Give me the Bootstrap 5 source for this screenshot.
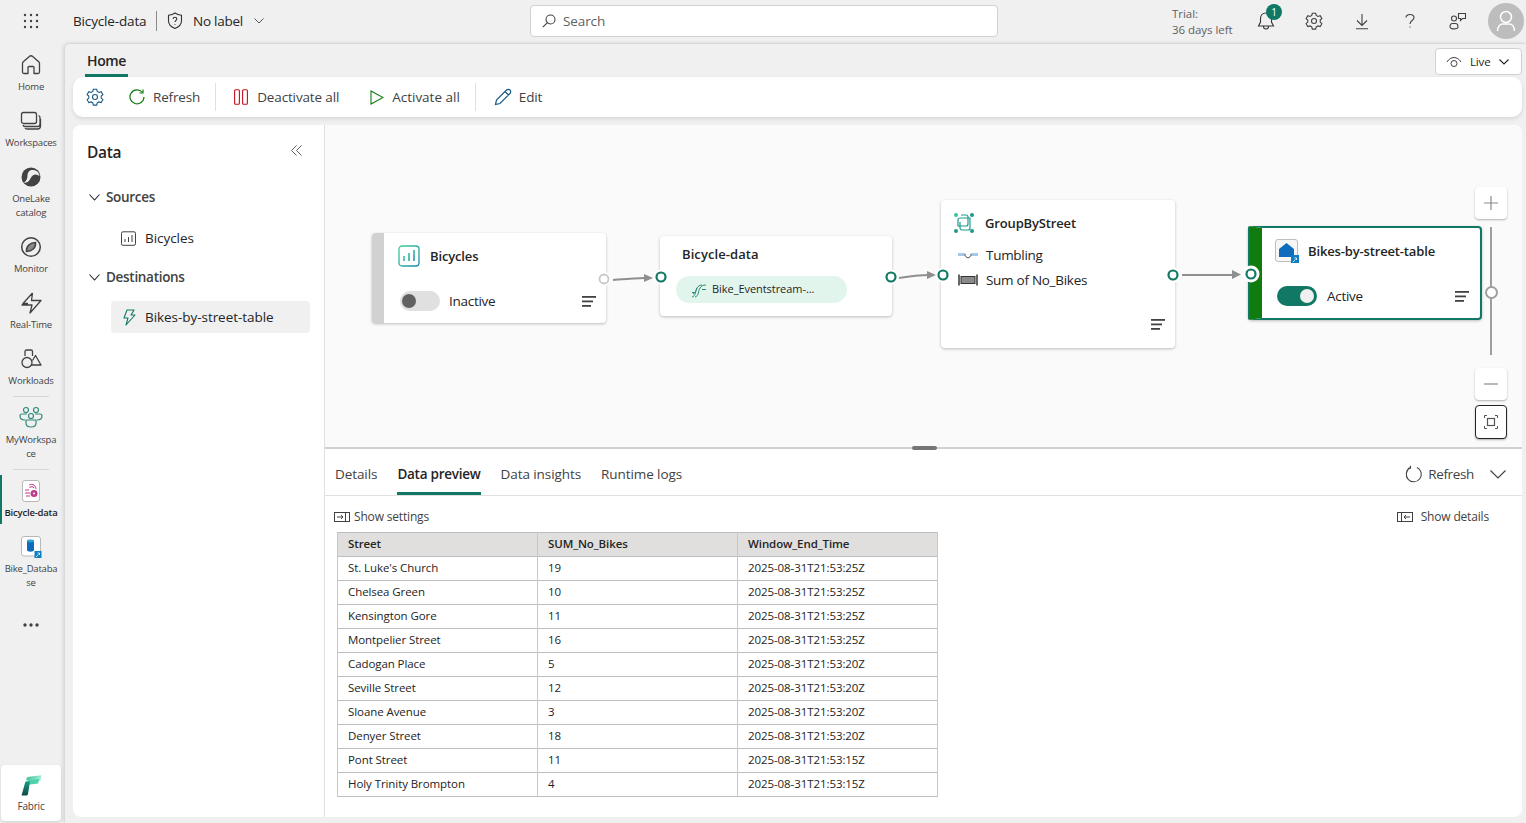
<!DOCTYPE html>
<html lang="en"><head><meta charset="utf-8"><title>Bicycle-data</title>
<link href="https://cdn.jsdelivr.net/npm/bootstrap@5.3.0/dist/css/bootstrap.min.css" rel="stylesheet">
<script src="https://cdn.jsdelivr.net/npm/bootstrap@5.3.0/dist/js/bootstrap.bundle.min.js"></script>
<style>
html,body{height:100%;overflow:hidden}
body{font-family:"Open Sans","Noto Sans",sans-serif;font-size:13.5px;letter-spacing:-.15px;color:#242424;background:#f0f0f0}
svg{display:block;flex:none}
.shell{height:823px}
.topbar{height:44px;flex:none;padding-bottom:2px}
.waffle{width:62px}
.docname{margin-left:11px;width:83px}
.vsep{width:1px;height:20px;background:#8a8a8a}
.lblgroup{width:373px;padding-left:10px}
.lbltext{margin-left:10px;letter-spacing:-.25px}
.lblchev{margin-left:11px}
.searchbox{width:468px;height:32px;border:1px solid #d1d1d1;border-radius:4px;background:#fff;padding-left:11px;color:#616161}
.searchlabel{margin-left:7px;letter-spacing:-.1px}
.trial{margin-left:174px;margin-top:2px;width:70px;font-size:11.5px;line-height:16px;color:#616161;letter-spacing:-.05px;white-space:nowrap}
.tbtn{width:48px;height:44px}
.avatar{width:36px;height:36px;border-radius:50%;background:#bdbdbd;margin-left:6px}
.bellbadge{position:absolute;left:24px;top:5px;width:16px;height:16px;border-radius:50%;background:#117865;color:#fff;font-size:10px;line-height:16px;text-align:center}
.rail{width:65px;flex:none;padding:0 3px 2px 0}
.railitem{position:relative;padding-top:9px;padding-bottom:6px;text-align:center;font-size:9.5px;line-height:14px;color:#424242;letter-spacing:-.2px;white-space:nowrap}
.railitem svg{margin:0 auto 3px}
.railitem.current{font-weight:600;color:#242424}
.railitem.current::before{content:"";position:absolute;left:0;top:5px;bottom:2px;width:2px;background:#117865}
.raildiv{height:1px;width:36px;margin:2px auto 0;background:#d6d6d6}
.morebtn{margin-top:19px;height:40px}
.fabricbox{width:60px;height:56px;margin:auto 0 0 1px;background:#fff;border-radius:4px;box-shadow:0 1px 3px rgba(0,0,0,.15);text-align:center;font-size:10px;color:#424242;padding-top:10px;letter-spacing:-.2px}
.fabricbox svg{margin:0 auto 3px}
.mainarea{width:1461px;padding:0 4px 6px 8px;box-shadow:-2px 0 4px rgba(0,0,0,.1),0 -1px 2px rgba(0,0,0,.08);border-top-left-radius:4px}
.tabrow{height:33px;flex:none}
.hometab{margin-left:12px;padding:0 2px;width:43px;height:33px;font-weight:600;font-size:14px;border-bottom:3px solid #117865;line-height:33px;white-space:nowrap;letter-spacing:-.35px}
.livebtn{margin-top:4px;width:87px;height:27px;background:#fff;border:1px solid #d1d1d1;border-radius:4px;font-size:11.5px;padding-left:10px}
.toolbar{height:40px;flex:none;background:#fff;border-radius:10px;box-shadow:0 2px 4px rgba(0,0,0,.1);margin-bottom:8px;padding-left:13px;color:#424242}
.tsep{width:1px;height:28px;background:#e0e0e0}
.tsepa{margin:0 18px 0 15px}
.tsepb{margin:0 18px 0 15px}
.activatelabel{margin-left:8px;letter-spacing:0}
.bodypanel{background:#fff;border-radius:8px;overflow:hidden;min-height:0}
.datapanel{width:252px;flex:none;border-right:1px solid #e0e0e0;position:relative}
.datatitle{font-size:15.5px;font-weight:600;padding:15px 0 0 14px;line-height:24px;letter-spacing:-.3px}
.collapsebtn{position:absolute;left:218px;top:20px}
.treehead{font-weight:600;font-size:13.5px;color:#424242;padding-left:16px;line-height:20px;letter-spacing:-.3px}
.treechev{margin-right:6px}
.treeitem{margin-left:38px;width:199px;height:32px;padding-left:10px;border-radius:4px;font-size:13.5px;color:#242424;letter-spacing:-.05px}
.treelabel{margin-left:9px;margin-top:1px}
.selrow{background:#f0f0f0}
.canvasarea{height:324px;flex:none;position:relative;background:#fafafa;border-bottom:2px solid #d1d1d1}
.wires{position:absolute;left:0;top:0;z-index:3;pointer-events:none}
.pnode{position:absolute;background:#fff;border-radius:4px;box-shadow:0 1px 3px rgba(0,0,0,.25);letter-spacing:-.28px}
.n-src{left:47px;top:108px;width:234px;height:90px;border-left:12px solid #d1d1d1;padding:12px 10px 12px 14px}
.n-hub{left:335px;top:111px;width:232px;height:80px;padding:8px 16px}
.n-grp{left:616px;top:75px;width:234px;height:148px;padding:12px 10px 12px 12px}
.n-dst{left:923px;top:101px;width:234px;height:94px;border:2px solid #117865;border-left:14px solid #107c10;box-shadow:0 1px 3px rgba(0,0,0,.25);padding:11px 11px 11px 13px}
.n-dst::before{content:"";position:absolute;left:-14px;top:-2px;bottom:-2px;width:2px;background:#117865;border-radius:2px 0 0 2px}
.nodetitle{font-weight:600;font-size:13px;line-height:20px;white-space:nowrap;letter-spacing:-.15px}
.hubtitle{padding-left:6px;letter-spacing:.08px}
.togl{width:40px;height:20px;border-radius:10px;position:relative;flex:none}
.togl::after{content:"";position:absolute;top:3px;width:14px;height:14px;border-radius:50%}
.togl.off{background:#e0e0e0}
.togl.off::after{left:2px;background:#616161}
.togl.on{background:#117865}
.togl.on::after{right:3px;background:#f0f0f0}
.pill{height:27px;width:171px;margin:12px 0 0 0;background:#e2f5ed;border-radius:14px;padding-left:15px;font-size:11px;white-space:nowrap;letter-spacing:-.05px}
.zoomstack{position:absolute;left:1150px;top:62px;width:32px;z-index:4}
.zbtn{width:32px;height:32px;background:#fff;border-radius:4px;box-shadow:0 1px 2px rgba(0,0,0,.3)}
.zfit{height:34px;border:1.5px solid #242424;box-shadow:0 1px 2px rgba(0,0,0,.3);margin-top:5px}
.zrail{height:128px;margin:8px 0 13px;position:relative}
.zrail::before{content:"";position:absolute;left:15px;top:0;bottom:0;width:2px;background:#9e9e9e}
.zrail::after{content:"";position:absolute;left:10px;top:59px;width:13px;height:13px;border-radius:50%;background:#fff;border:2px solid #9e9e9e}
.splitgrip{position:absolute;left:587px;bottom:-3px;width:25px;height:4px;border-radius:2px;background:#757575;z-index:2}
.ltabs{height:47px;flex:none;border-bottom:1px solid #e0e0e0;padding-left:10px;gap:20px}
.ltab{height:46px;line-height:50px;font-size:13.5px;color:#424242;letter-spacing:-.08px}
.ltab.sel{font-weight:600;color:#242424;border-bottom:3px solid #117865;letter-spacing:-.25px}
.ltabaction{height:50px;color:#424242;margin-right:16px;letter-spacing:-.35px}
.subbar{height:26px;margin-top:8px;padding:0 33px 0 9px;font-size:12px;color:#424242;letter-spacing:-.17px}
.datagrid{width:601px;margin:2px 0 0 12px;table-layout:fixed;border-color:#bdbdbd;font-size:11.5px;letter-spacing:-.08px}
.datagrid th,.datagrid td{height:24px;padding:0 10px 1px;line-height:22px;vertical-align:middle;color:#242424;border-color:#c8c8c8}
.datagrid th{height:23px;background:#e1dfdd;font-weight:600;font-size:11.5px;letter-spacing:-.1px}
</style></head>
<body>
<div class="shell d-flex flex-column">
<header class="topbar d-flex align-items-center">
  <div class="waffle d-flex justify-content-center"><svg width="16" height="16" viewBox="0 0 16 16" fill="#424242"><circle cx="2" cy="2" r="1.2"/><circle cx="8" cy="2" r="1.2"/><circle cx="14" cy="2" r="1.2"/><circle cx="2" cy="8" r="1.2"/><circle cx="8" cy="8" r="1.2"/><circle cx="14" cy="8" r="1.2"/><circle cx="2" cy="14" r="1.2"/><circle cx="8" cy="14" r="1.2"/><circle cx="14" cy="14" r="1.2"/></svg></div>
  <div class="docname text-nowrap">Bicycle-data</div><div class="vsep"></div>
  <div class="lblgroup d-flex align-items-center"><svg width="16" height="18" viewBox="0 0 16 18" fill="none" stroke="#333" stroke-width="1.1"><path d="M8 1c2 1.500 4 2 6.500 2.200V9c0 3.500-3 6-6.500 7.500C4.500 15 1.500 12.500 1.500 9V3.200C4 3 6 2.500 8 1z"/><path d="M6.200 7c0-2.300 3.600-2.300 3.600 0 0 1.300-1.800 1.500-1.800 3M8 12v.8"/></svg><span class="lbltext">No label</span><svg class="lblchev" width="10" height="6" viewBox="0 0 10 6" fill="none" stroke="#555"><path d="M.5.5 5 5 9.500.5"/></svg></div>
  <div class="searchbox d-flex align-items-center"><svg width="14" height="14" viewBox="0 0 14 14" fill="none" stroke="#424242" stroke-width="1.100"><circle cx="8.500" cy="5.500" r="4.500"/><path d="M5.200 8.800.8 13.200"/></svg><span class="searchlabel">Search</span></div>
  <div class="trial">Trial:<br>36 days left</div>
  <div class="tbtn position-relative d-flex align-items-center justify-content-center"><svg width="18" height="20" viewBox="0 0 18 20" fill="none" stroke="#333" stroke-width="1.100"><path d="M9 2c-3.500 0-5.500 2.500-5.500 5.500V11L1.500 15h15l-2-4V7.500C14.500 4.500 12.500 2 9 2zM6.500 15.500c0 3.300 5 3.300 5 0"/></svg><span class="bellbadge">1</span></div>
  <div class="tbtn d-flex align-items-center justify-content-center"><svg width="18" height="18" viewBox="0 0 18 18" fill="none" stroke="#424242" stroke-width="1.100"><path d="M7.300 1.200h3.400l.5 2.200 1.800 1 2.200-.7 1.700 2.900-1.700 1.500v2l1.700 1.600-1.700 2.900-2.200-.7-1.800 1-.5 2.200H7.300l-.5-2.200-1.800-1-2.200.7-1.700-2.900 1.700-1.600v-2L1.100 6.600l1.700-2.900 2.200.7 1.800-1z"/><circle cx="9" cy="9" r="2.500"/></svg></div>
  <div class="tbtn d-flex align-items-center justify-content-center"><svg width="14" height="17" viewBox="0 0 14 17" fill="none" stroke="#424242" stroke-width="1.100"><path d="M7 1v11M2 7.500l5 5 5-5M1 15.800h12"/></svg></div>
  <div class="tbtn d-flex align-items-center justify-content-center"><svg width="10" height="16" viewBox="0 0 10 16" fill="none" stroke="#424242" stroke-width="1.100"><path d="M1 4.500C1 .4 9 .4 9 4.500 9 7.500 5 7.500 5 11M5 13.500v1"/></svg></div>
  <div class="tbtn d-flex align-items-center justify-content-center"><svg width="18" height="18" viewBox="0 0 18 18" fill="none" stroke="#424242" stroke-width="1.100"><circle cx="5" cy="6.500" r="2.500"/><path d="M1 15c0-2.500 1-3.500 2.500-3.500h3C8 11.500 9 12.500 9 15c0 2.500-8 2.500-8 0zM9.500 1.500h7v5h-3l-2 2v-2h-2z"/></svg></div>
  <div class="avatar d-flex align-items-center justify-content-center"><svg width="20" height="22" viewBox="0 0 20 22" fill="none" stroke="#fff" stroke-width="1.500"><circle cx="10" cy="7" r="5.500"/><path d="M1.500 21c0-5 3-7 5-7h7c2 0 5 2 5 7"/></svg></div>
</header>
<div class="d-flex flex-grow-1" style="min-height:0">
  <nav class="rail d-flex flex-column">
    <div class="railitem"><svg width="24" height="24" viewBox="0 0 24 24" fill="none" stroke="#424242" stroke-width="1.300" stroke-linejoin="round"><path d="M10.300 3.500a2.500 2.500 0 0 1 3.400 0l6 5.300c.5.500.8 1 .8 1.700V19a1.500 1.500 0 0 1-1.500 1.500H15V14.500a1 1 0 0 0-1-1h-4a1 1 0 0 0-1 1v6H5A1.500 1.500 0 0 1 3.500 19v-8.500c0-.7.300-1.200.8-1.700z"/></svg>Home</div>
    <div class="railitem"><svg width="24" height="24" viewBox="0 0 24 24" fill="none" stroke="#424242" stroke-width="1.300"><rect x="2.500" y="3.500" width="15" height="11" rx="2"/><path d="M19.500 6.500c1 .3 1.500 1 1.500 2V15c0 1.500-1 2.500-2.500 2.500H6c-1 0-1.700-.5-2-1.500M21.500 10v7c0 2-1 3-3 3H8c-1 0-1.700-.4-2-1"/></svg>Workspaces</div>
    <div class="railitem"><svg width="24" height="24" viewBox="0 0 24 24"><circle cx="12" cy="12" r="9.500" fill="#424242"/><path d="M11 5.500c5-1.500 9 1 9.500 5.500-3-2.500-6.500-2-8.500 1.500-1.500 3.500-4 6-7 5 2.500-1.500 3.500-4 3.500-7 0-2 .8-4 2.500-5z" fill="#f0f0f0"/></svg>OneLake<br>catalog</div>
    <div class="railitem"><svg width="24" height="24" viewBox="0 0 24 24" fill="none" stroke="#424242" stroke-width="1.500"><circle cx="12" cy="12" r="9.300"/><path d="M7.500 16.500C7 11 11 7.500 16.500 7.500 17 13 13 16.500 7.500 16.500z" fill="#8a8a8a"/></svg>Monitor</div>
    <div class="railitem"><svg width="24" height="24" viewBox="0 0 24 24" fill="none" stroke="#424242" stroke-width="1.300" stroke-linejoin="round"><path d="M13.500 2 4 12.500h5M14 9.500h8L11 22l2-8H3l2.500-2.500M13.500 2 12.500 9.500h1.500"/></svg>Real-Time</div>
    <div class="railitem"><svg width="24" height="24" viewBox="0 0 24 24" fill="none" stroke="#424242" stroke-width="1.300" stroke-linejoin="round"><circle cx="8" cy="15.500" r="5"/><path d="M6 9V4.500A1.500 1.500 0 0 1 7.500 3H12a1.500 1.500 0 0 1 1.500 1.500V9M12 18h10l-5.500-9.500-3 5"/></svg>Workloads</div>
    <div class="raildiv"></div>
    <div class="railitem"><svg width="24" height="24" viewBox="0 0 24 24" fill="none" stroke="#2f8a7b" stroke-width="1.200"><circle cx="7" cy="4" r="2.500"/><circle cx="17" cy="4" r="2.500"/><circle cx="12" cy="10" r="2.500"/><path d="M8 8H3c-1 0-2 .6-2 2 0 2 1.500 4 5 4M16 8h5c1 0 2 .6 2 2 0 2-1.500 4-5 4M7 14h10v3c0 2.500-2 4-5 4s-5-1.500-5-4z"/></svg>MyWorkspa<br>ce</div>
    <div class="raildiv"></div>
    <div class="railitem current"><svg width="24" height="24" viewBox="0 0 24 24"><rect x="3.500" y="1.500" width="17" height="21" rx="2.500" fill="#fff" stroke="#b8b8b8"/><path d="M10 6c4-2 7 1 7 4" fill="none" stroke="#c03b8b" stroke-width="1"/><path d="M6 11h4M6 14h5M7 17h4M10.500 8.500c1.500-1 4-1 4.500.5" fill="none" stroke="#c03b8b" stroke-width="1.100"/><circle cx="15" cy="14.500" r="3.500" fill="#c03b8b"/><circle cx="15" cy="14.500" r="1" fill="#fff"/></svg>Bicycle-data</div>
    <div class="railitem"><svg width="24" height="24" viewBox="0 0 24 24"><rect x="2.500" y="1.500" width="19" height="19.500" rx="2.500" fill="#fff" stroke="#b8b8b8"/><path d="M8 6v9c0 2.200 7 2.200 7 0V6z" fill="#0f6cbd"/><ellipse cx="11.500" cy="6" rx="3.500" ry="1.400" fill="#2a9fd8"/><rect x="15.500" y="16" width="7" height="7" fill="#0f7fc4"/><path d="M17 22l2.500-2.500M18.500 18h2v2" stroke="#fff" fill="none" stroke-width=".8"/></svg>Bike_Databa<br>se</div>
    <div class="morebtn d-flex justify-content-center"><svg class="mt-2" width="16" height="4" viewBox="0 0 16 4" fill="#424242"><circle cx="2" cy="2" r="1.700"/><circle cx="8" cy="2" r="1.700"/><circle cx="14" cy="2" r="1.700"/></svg></div>
    <div class="fabricbox"><svg width="21" height="21" viewBox="0 0 21 21"><defs><linearGradient id="fg" x1="0" y1="0" x2="1" y2=".3"><stop offset="0" stop-color="#2fb896"/><stop offset="1" stop-color="#a5f0d2"/></linearGradient><linearGradient id="fh" x1="0" y1="0" x2="0" y2="1"><stop offset="0" stop-color="#1b9a84"/><stop offset="1" stop-color="#0d4a47"/></linearGradient></defs><path d="M5 4.500Q5.500 2 8 1.800L20.500.2 19.500 6 12 7z" fill="url(#fg)"/><path d="M4 8q.5-2.500 3-2.800L18 4l-.8 4.500-8 1z" fill="#4fd3ac"/><path d="M4 8c0-1 2-1.500 5-1.500L7 19c-.2 1-1 1.500-2 1.500H.5z" fill="url(#fh)"/></svg>Fabric</div>
  </nav>
  <main class="mainarea d-flex flex-column">
    <div class="tabrow d-flex justify-content-between"><div class="hometab">Home</div>
      <div class="livebtn d-flex align-items-center"><svg width="16" height="12" viewBox="0 0 16 12" fill="none" stroke="#424242"><path d="M1 6c3.500-6 10.500-6 14 0"/><circle cx="8" cy="7.500" r="3"/></svg><span class="ms-2">Live</span><svg class="ms-2" width="10" height="6" viewBox="0 0 10 6" fill="none" stroke="#242424" stroke-width="1.100"><path d="M.5.5 5 5 9.500.5"/></svg></div>
    </div>
    <div class="toolbar d-flex align-items-center">
      <svg width="18" height="18" viewBox="0 0 18 18" fill="none" stroke="#1b5a85" stroke-width="1.100"><path d="M7.300 1.200h3.400l.5 2.200 1.800 1 2.200-.7 1.700 2.900-1.700 1.500v2l1.700 1.600-1.700 2.900-2.200-.7-1.800 1-.5 2.200H7.300l-.5-2.200-1.800-1-2.200.7-1.700-2.900 1.700-1.600v-2L1.100 6.600l1.700-2.900 2.200.7 1.800-1z"/><circle cx="9" cy="9" r="2.500"/></svg>
      <svg style="margin-left:25px" width="16" height="16" viewBox="0 0 16 16" fill="none" stroke="#107c10" stroke-width="1.200"><path d="M13.500 3.500A7 7 0 1 0 15 8"/><path d="M14 .5v3.500h-3.500"/></svg>
      <span class="ms-2">Refresh</span><div class="tsep tsepa"></div>
      <svg width="14" height="16" viewBox="0 0 14 16" fill="none" stroke="#c50f1f" stroke-width="1.100"><rect x=".6" y=".8" width="4.800" height="14.400" rx="1"/><rect x="8.600" y=".8" width="4.800" height="14.400" rx="1"/></svg>
      <span style="margin-left:9px">Deactivate all</span>
      <svg style="margin-left:31px" width="14" height="15" viewBox="0 0 14 15" fill="none" stroke="#107c10" stroke-width="1.100"><path d="M1 1v13l12-6.500z"/></svg>
      <span class="activatelabel">Activate all</span><div class="tsep tsepb"></div>
      <svg width="18" height="18" viewBox="0 0 18 18" fill="none" stroke="#1b5a85" stroke-width="1.200"><path d="M1.500 16.500l1-4.500L12.500 2a2 2 0 0 1 3.500 3.500L6 15.500zM11 3.500 14.500 7"/></svg>
      <span style="margin-left:7px">Edit</span>
    </div>
    <div class="bodypanel d-flex flex-grow-1">
      <aside class="datapanel">
        <div class="datatitle">Data</div>
        <svg class="collapsebtn" width="11" height="11" viewBox="0 0 11 11" fill="none" stroke="#616161"><path d="M5.500.5l-5 5 5 5M10.500.5l-5 5 5 5"/></svg>
        <div class="treehead d-flex align-items-center" style="margin-top:23px"><svg class="treechev" width="11" height="7" viewBox="0 0 11 7" fill="none" stroke="#242424" stroke-width="1.100"><path d="M.5.5 5.500 6l5-5.500"/></svg>Sources</div>
        <div class="treeitem d-flex align-items-center" style="margin-top:15px"><svg width="15" height="15" viewBox="0 0 15 15" fill="none" stroke="#424242"><rect x=".5" y=".8" width="14" height="13.500" rx="1.500"/><path d="M4 11V8M7.500 11V6M11 11V4"/></svg><span style="margin-left:9px">Bicycles</span></div>
        <div class="treehead d-flex align-items-center" style="margin-top:13px"><svg class="treechev" width="11" height="7" viewBox="0 0 11 7" fill="none" stroke="#242424" stroke-width="1.100"><path d="M.5.5 5.500 6l5-5.500"/></svg>Destinations</div>
        <div class="treeitem selrow d-flex align-items-center" style="margin-top:14px"><svg width="15" height="17" viewBox="0 0 15 17" fill="none" stroke="#117865" stroke-width="1.100" stroke-linejoin="round"><path d="M6 1h7l-3 5h4L5 16l2-7H3z"/></svg><span class="treelabel">Bikes-by-street-table</span></div>
      </aside>
      <section class="flex-grow-1 d-flex flex-column" style="min-width:0">
        <div class="canvasarea">
          <div class="pnode n-src"><div class="d-flex align-items-center"><svg width="22" height="22" viewBox="0 0 22 22" fill="none"><defs><linearGradient id="tl" x1="0" y1="0" x2="1" y2="1"><stop offset="0" stop-color="#3dcf9a"/><stop offset="1" stop-color="#1c8ca8"/></linearGradient></defs><rect x="1" y="1" width="20" height="20" rx="3" stroke="url(#tl)" stroke-width="1.300"/><path d="M6 16v-5M11 16V8M16 16V5" stroke="url(#tl)" stroke-width="1.500"/></svg><span class="nodetitle" style="margin-left:10px">Bicycles</span></div>
            <div class="d-flex align-items-center" style="margin-top:24px;padding-left:2px"><span class="togl off"></span><span style="margin-left:9px">Inactive</span><svg class="ms-auto" width="14" height="11" viewBox="0 0 14 11" fill="#424242"><rect y="0" width="14" height="1.800"/><rect y="4.500" width="11" height="1.800"/><rect y="9" width="9" height="1.800"/></svg></div></div>
          <div class="pnode n-hub"><div class="nodetitle hubtitle">Bicycle-data</div><div class="pill d-flex align-items-center"><svg width="16" height="16" viewBox="0 0 16 16" fill="none" stroke="#2a8c78"><path d="M1 15c4-1 3-6 5-9 1-2 3-3 5-3M4 15c4-1 3-6 5-9 1-2 3-3 6-3M2 12c3-1 3-4 4-6M1 10.500h3M11 7.500h4"/></svg><span style="margin-left:5px">Bike_Eventstream-...</span></div></div>
          <div class="pnode n-grp"><div class="d-flex align-items-center"><svg width="22" height="22" viewBox="0 0 22 22" fill="none" stroke="#1e9a8c" stroke-width="1.200"><circle cx="3" cy="3" r="2" fill="#35c98c" stroke="none"/><circle cx="19" cy="3" r="2" fill="#1e9a8c" stroke="none"/><circle cx="3" cy="19" r="2" fill="#1e9a8c" stroke="none"/><circle cx="19" cy="19" r="2" fill="#1e9a8c" stroke="none"/><path d="M8 3h5a2 2 0 0 1 2 2v7a2 2 0 0 1-2 2H5V8a2 2 0 0 1 2-2h10v10a2 2 0 0 1-2 2H9a2 2 0 0 1-2-2v-6"/></svg><span class="nodetitle" style="margin-left:10px">GroupByStreet</span></div>
            <div class="d-flex align-items-center" style="margin-top:11px;padding-left:5px;line-height:20px"><svg width="20" height="8" viewBox="0 0 20 8"><rect y="2" width="7" height="3" fill="#a9c8e8"/><rect x="13" y="2" width="7" height="3" fill="#a9c8e8"/><path d="M7 3c0 5 6 5 6 0" fill="none" stroke="#555"/></svg><span style="margin-left:8px">Tumbling</span></div>
            <div class="d-flex align-items-center" style="margin-top:5px;padding-left:5px;line-height:20px"><svg width="20" height="12" viewBox="0 0 20 12"><path d="M1 .5v11M19 .5v11" stroke="#333" stroke-width="1.500"/><rect x="3" y="2.500" width="14" height="7" fill="#8a8a8a" stroke="#333"/></svg><span style="margin-left:8px">Sum of No_Bikes</span></div>
            <svg class="position-absolute" style="right:10px;bottom:18px" width="14" height="11" viewBox="0 0 14 11" fill="#424242"><rect y="0" width="14" height="1.800"/><rect y="4.500" width="11" height="1.800"/><rect y="9" width="9" height="1.800"/></svg></div>
          <div class="pnode n-dst"><div class="d-flex align-items-center"><svg width="24" height="24" viewBox="0 0 24 24"><rect x=".5" y=".5" width="22" height="22" rx="2.500" fill="#f6f6f6" stroke="#bdbdbd"/><path d="M4 10 11.500 4 19 10v8H4z" fill="#0f6cbd"/><rect x="16" y="16" width="8" height="8" fill="#0f7fc4"/><path d="M18 23l2.500-2.500M19.500 19h2v2" stroke="#fff" fill="none" stroke-width=".8"/></svg><span class="nodetitle" style="margin-left:9px">Bikes-by-street-table</span></div>
            <div class="d-flex align-items-center" style="margin-top:23px;padding-left:2px"><span class="togl on"></span><span style="margin-left:10px">Active</span><svg class="ms-auto" width="14" height="11" viewBox="0 0 14 11" fill="#424242"><rect y="0" width="14" height="1.800"/><rect y="4.500" width="11" height="1.800"/><rect y="9" width="9" height="1.800"/></svg></div></div>
          <svg class="wires" width="1197" height="322" viewBox="325 125 1197 322" fill="none">
            <g stroke="#8f8f8f" stroke-width="2"><path d="M613 280c12-1 22-2 32-2"/><path d="M899 278c12-2 20-3 30-3"/><path d="M1182 275h52"/></g>
            <g fill="#8f8f8f"><path d="M644 274l9 4-9 4z"/><path d="M927 271l9 4-9 4z"/><path d="M1232 270l9 4.500-9 4.500z"/></g>
            <circle cx="604" cy="279" r="7" fill="#fff"/><circle cx="604" cy="279" r="4.500" fill="#fff" stroke="#c8c8c8" stroke-width="1.800"/>
            <g fill="#fff"><circle cx="661" cy="277" r="7.500"/><circle cx="891" cy="277" r="7.500"/><circle cx="943" cy="275" r="7.500"/><circle cx="1173" cy="275" r="7.500"/><circle cx="1251" cy="274" r="8.500"/></g>
            <g fill="#fff" stroke="#117865" stroke-width="2.200"><circle cx="661" cy="277" r="4.500"/><circle cx="891" cy="277" r="4.500"/><circle cx="943" cy="275" r="4.500"/><circle cx="1173" cy="275" r="4.500"/><circle cx="1251" cy="274" r="4.500"/></g>
          </svg>
          <div class="zoomstack">
            <div class="zbtn d-flex align-items-center justify-content-center"><svg width="14" height="14" viewBox="0 0 14 14" stroke="#8a8a8a" stroke-width="1.200"><path d="M7 0v14M0 7h14"/></svg></div>
            <div class="zrail"></div>
            <div class="zbtn d-flex align-items-center justify-content-center"><svg width="14" height="2" viewBox="0 0 14 2" stroke="#8a8a8a" stroke-width="1.200"><path d="M0 1h14"/></svg></div>
            <div class="zbtn zfit d-flex align-items-center justify-content-center"><svg width="14" height="14" viewBox="0 0 14 14" fill="none" stroke="#555"><path d="M.5 3V.5H3M11 .5h2.500V3M.5 11v2.500H3M11 13.500h2.500V11"/><rect x="3.500" y="3.500" width="7" height="7" stroke-width="1.200"/></svg></div>
          </div>
          <div class="splitgrip"></div>
        </div>
        <div class="ltabs d-flex align-items-start">
          <div class="ltab">Details</div><div class="ltab sel">Data preview</div><div class="ltab">Data insights</div><div class="ltab">Runtime logs</div>
          <div class="ltabaction ms-auto d-flex align-items-center"><svg width="18" height="18" viewBox="0 0 18 18" fill="none" stroke="#424242" stroke-width="1.100"><path d="M12 2.500A7.500 7.500 0 1 1 5 2.800"/><path d="M5.500.8v2.500H2.800"/></svg><span style="margin-left:5px">Refresh</span><svg style="margin-left:16px" width="16" height="9" viewBox="0 0 16 9" fill="none" stroke="#424242" stroke-width="1.200"><path d="M.5.5 8 8 15.500.5"/></svg></div>
        </div>
        <div class="subbar d-flex align-items-center justify-content-between">
          <div class="d-flex align-items-center"><svg width="16" height="10" viewBox="0 0 16 10" fill="none" stroke="#424242"><rect x=".5" y=".5" width="15" height="9"/><path d="M3 5h6M7 3l2 2-2 2M11.500 .5v9"/></svg><span style="margin-left:4px">Show settings</span></div>
          <div class="d-flex align-items-center"><svg width="16" height="10" viewBox="0 0 16 10" fill="none" stroke="#424242"><rect x=".5" y=".5" width="15" height="9"/><path d="M4.500.5v9M13 5H7M9 3 7 5l2 2"/></svg><span style="margin-left:8px">Show details</span></div>
        </div>
        <table class="table table-bordered datagrid mb-0">
          <thead><tr><th>Street</th><th>SUM_No_Bikes</th><th>Window_End_Time</th></tr></thead>
          <tbody>
            <tr><td>St. Luke's Church</td><td>19</td><td>2025-08-31T21:53:25Z</td></tr>
            <tr><td>Chelsea Green</td><td>10</td><td>2025-08-31T21:53:25Z</td></tr>
            <tr><td>Kensington Gore</td><td>11</td><td>2025-08-31T21:53:25Z</td></tr>
            <tr><td>Montpelier Street</td><td>16</td><td>2025-08-31T21:53:25Z</td></tr>
            <tr><td>Cadogan Place</td><td>5</td><td>2025-08-31T21:53:20Z</td></tr>
            <tr><td>Seville Street</td><td>12</td><td>2025-08-31T21:53:20Z</td></tr>
            <tr><td>Sloane Avenue</td><td>3</td><td>2025-08-31T21:53:20Z</td></tr>
            <tr><td>Denyer Street</td><td>18</td><td>2025-08-31T21:53:20Z</td></tr>
            <tr><td>Pont Street</td><td>11</td><td>2025-08-31T21:53:15Z</td></tr>
            <tr><td>Holy Trinity Brompton</td><td>4</td><td>2025-08-31T21:53:15Z</td></tr>
          </tbody>
        </table>
      </section>
    </div>
  </main>
</div>
</div>
</body></html>
